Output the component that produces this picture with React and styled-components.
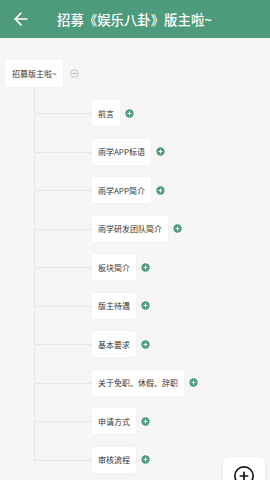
import React from "react";
import styled, { createGlobalStyle } from "styled-components";
import { ArrowLeft, CirclePlus } from "lucide-react";

const GREEN = "#4d9a7c";
const LINE = "#e6e6e6";

const GlobalStyle = createGlobalStyle`
  html, body {
    margin: 0;
    padding: 0;
    background: #f6f6f6;
    font-family: "Noto Sans CJK SC", "Noto Sans", sans-serif;
  }
`;

const Page = styled.div`
  width: 270px;
  height: 480px;
  overflow: hidden;
  background: #f6f6f6;
`;

const Header = styled.div`
  height: 38px;
  background: ${GREEN};
  display: flex;
  align-items: center;
  color: #fff;
`;

const BackButton = styled.div`
  width: 46px;
  padding-left: 11px;
  display: flex;
  align-items: center;
`;

const Title = styled.div`
  font-size: 13.4px;
  font-weight: 500;
  white-space: nowrap;
`;

const Tree = styled.div`
  padding-top: 22px;
`;

const RootRow = styled.div`
  display: flex;
  align-items: center;
  padding-left: 5px;
`;

const Node = styled.div`
  height: ${(p) => (p.root ? 27 : 26)}px;
  padding: 0 ${(p) => (p.root ? 7 : 6)}px;
  box-sizing: border-box;
  display: flex;
  align-items: center;
  background: #fff;
  border-radius: 2px;
  box-shadow: 0 0 3px rgba(0, 0, 0, 0.04);
  font-size: 8px;
  color: #333;
  white-space: nowrap;
`;

const Toggle = styled.svg`
  width: 9px;
  height: 9px;
  margin-left: ${(p) => p.gap}px;
  flex-shrink: 0;
`;

const Children = styled.div`
  position: relative;
  margin-left: 34px;
  padding-top: 6.75px;

  &::before {
    content: "";
    position: absolute;
    left: 0;
    top: 0;
    bottom: 19.25px;
    border-left: 1px solid ${LINE};
  }
`;

const ChildRow = styled.div`
  position: relative;
  height: 38.5px;
  display: flex;
  align-items: center;
  padding-left: 58px;

  &::before {
    content: "";
    position: absolute;
    left: 0;
    width: 58px;
    top: 50%;
    border-top: 1px solid ${LINE};
  }
`;

const Fab = styled.div`
  position: fixed;
  left: 223px;
  top: 457px;
  width: 42px;
  height: 42px;
  background: #fff;
  border-radius: 7px;
  box-shadow: 0 0 4px rgba(0, 0, 0, 0.05);
  display: flex;
  justify-content: center;
  padding-top: 8px;
  box-sizing: border-box;
  color: #111;
`;

const PlusDot = () => (
  <Toggle viewBox="0 0 10 10" gap={5}>
    <circle cx="5" cy="5" r="4.6" fill={GREEN} />
    <path d="M5 2.8v4.4M2.8 5h4.4" stroke="#fff" strokeWidth="1.1" />
  </Toggle>
);

const MinusDot = () => (
  <Toggle viewBox="0 0 10 10" gap={7}>
    <circle cx="5" cy="5" r="4.2" fill="#f2f2f2" stroke="#b8b8b8" strokeWidth="0.9" />
    <path d="M3 5h4" stroke="#a8a8a8" strokeWidth="0.9" />
  </Toggle>
);

const items = [
  "前言",
  "雨学APP标语",
  "雨学APP简介",
  "雨学研发团队简介",
  "板块简介",
  "版主待遇",
  "基本要求",
  "关于免职、休假、辞职",
  "申请方式",
  "审核流程",
];

export default function App() {
  return (
    <Page>
      <GlobalStyle />
      <Header>
        <BackButton>
          <ArrowLeft size={20} strokeWidth={2} />
        </BackButton>
        <Title>招募《娱乐八卦》版主啦~</Title>
      </Header>
      <Tree>
        <RootRow>
          <Node root>招募版主啦~</Node>
          <MinusDot />
        </RootRow>
        <Children>
          {items.map((t) => (
            <ChildRow key={t}>
              <Node>{t}</Node>
              <PlusDot />
            </ChildRow>
          ))}
        </Children>
      </Tree>
      <Fab>
        <CirclePlus size={22} strokeWidth={1.8} />
      </Fab>
    </Page>
  );
}
